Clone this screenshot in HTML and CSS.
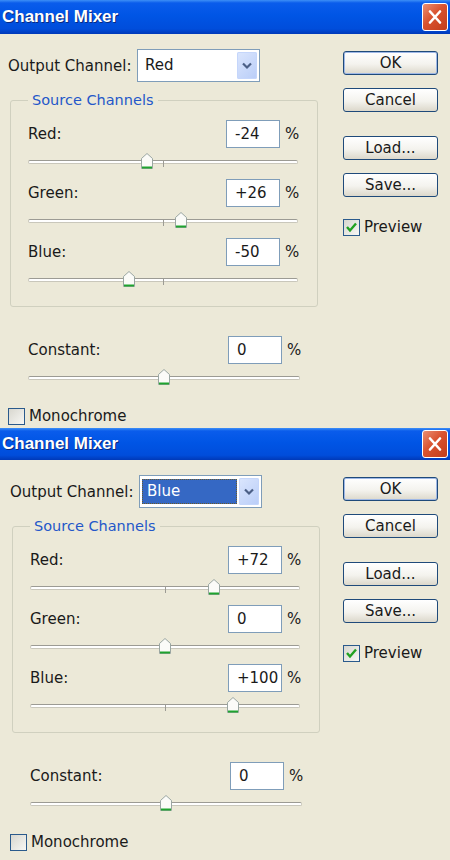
FILE: index.html
```html
<!DOCTYPE html>
<html lang="en">
<head>
    <meta charset="UTF-8">
    <title>Channel Mixer</title>
    <link rel="stylesheet" href="styles.css">
</head>
<body>
    <div class="dialog">
        <div class="titlebar">
            <span class="title">Channel Mixer</span>
            <span class="close"><svg width="24" height="26" viewBox="0 0 24 26"><path d="M7 7.5 L17 18.5 M17 7.5 L7 18.5" stroke="#fff" stroke-width="2.6" stroke-linecap="round"/></svg></span>
        </div>
        <div class="dialog-body">
            <div class="main">
                <div class="output-row">
                    <span class="output-label">Output Channel:</span>
                    <div class="select">
                        <span class="select-value">Red</span>
                        <span class="select-arrow"><svg width="20" height="27" viewBox="0 0 20 27"><path d="M6 11.5 L10 15.5 L14 11.5" fill="none" stroke="#4b5f86" stroke-width="2.2"/></svg></span>
                    </div>
                </div>
                <fieldset class="group">
                    <legend>Source Channels</legend>
                    <div class="channels">
                        <div class="channel">
                            <div class="channel-head"><span class="channel-name">Red:</span><span class="field">-24</span><span class="pct">%</span></div>
                            <div class="slider"><span class="tick"></span><span class="thumb" style="left: 44%"><svg width="12" height="16" viewBox="0 0 12 16"><path d="M6 0.5 L11.5 5.5 L11.5 15.5 L0.5 15.5 L0.5 5.5 Z" fill="#fbfbf8" stroke="#9aa6a2"/><path d="M1 14.5 H11" stroke="#1fa32e" stroke-width="2"/></svg></span></div>
                        </div>
                        <div class="channel">
                            <div class="channel-head"><span class="channel-name">Green:</span><span class="field">+26</span><span class="pct">%</span></div>
                            <div class="slider"><span class="tick"></span><span class="thumb" style="left: 56.5%"><svg width="12" height="16" viewBox="0 0 12 16"><path d="M6 0.5 L11.5 5.5 L11.5 15.5 L0.5 15.5 L0.5 5.5 Z" fill="#fbfbf8" stroke="#9aa6a2"/><path d="M1 14.5 H11" stroke="#1fa32e" stroke-width="2"/></svg></span></div>
                        </div>
                        <div class="channel">
                            <div class="channel-head"><span class="channel-name">Blue:</span><span class="field">-50</span><span class="pct">%</span></div>
                            <div class="slider"><span class="tick"></span><span class="thumb" style="left: 37.5%"><svg width="12" height="16" viewBox="0 0 12 16"><path d="M6 0.5 L11.5 5.5 L11.5 15.5 L0.5 15.5 L0.5 5.5 Z" fill="#fbfbf8" stroke="#9aa6a2"/><path d="M1 14.5 H11" stroke="#1fa32e" stroke-width="2"/></svg></span></div>
                        </div>
                    </div>
                </fieldset>
                <div class="channel constant">
                    <div class="channel-head"><span class="channel-name">Constant:</span><span class="field">0</span><span class="pct">%</span></div>
                    <div class="slider"><span class="thumb" style="left: 50%"><svg width="12" height="16" viewBox="0 0 12 16"><path d="M6 0.5 L11.5 5.5 L11.5 15.5 L0.5 15.5 L0.5 5.5 Z" fill="#fbfbf8" stroke="#9aa6a2"/><path d="M1 14.5 H11" stroke="#1fa32e" stroke-width="2"/></svg></span></div>
                </div>
                <div class="check mono"><span class="box"></span>Monochrome</div>
            </div>
            <div class="side">
                <button class="btn btn-default">OK</button>
                <button class="btn btn-cancel">Cancel</button>
                <button class="btn btn-load">Load...</button>
                <button class="btn btn-save">Save...</button>
                <div class="check preview"><span class="box"><svg width="15" height="15" viewBox="0 0 15 15"><path d="M3 7 L6 10.5 L12 3.5" fill="none" stroke="#21a121" stroke-width="2.4"/></svg></span>Preview</div>
            </div>
        </div>
    </div>

    <div class="dialog">
        <div class="titlebar">
            <span class="title">Channel Mixer</span>
            <span class="close"><svg width="24" height="26" viewBox="0 0 24 26"><path d="M7 7.5 L17 18.5 M17 7.5 L7 18.5" stroke="#fff" stroke-width="2.6" stroke-linecap="round"/></svg></span>
        </div>
        <div class="dialog-body">
            <div class="main">
                <div class="output-row">
                    <span class="output-label">Output Channel:</span>
                    <div class="select">
                        <span class="select-value selected">Blue</span>
                        <span class="select-arrow"><svg width="20" height="27" viewBox="0 0 20 27"><path d="M6 11.5 L10 15.5 L14 11.5" fill="none" stroke="#4b5f86" stroke-width="2.2"/></svg></span>
                    </div>
                </div>
                <fieldset class="group">
                    <legend>Source Channels</legend>
                    <div class="channels">
                        <div class="channel">
                            <div class="channel-head"><span class="channel-name">Red:</span><span class="field">+72</span><span class="pct">%</span></div>
                            <div class="slider"><span class="tick"></span><span class="thumb" style="left: 68%"><svg width="12" height="16" viewBox="0 0 12 16"><path d="M6 0.5 L11.5 5.5 L11.5 15.5 L0.5 15.5 L0.5 5.5 Z" fill="#fbfbf8" stroke="#9aa6a2"/><path d="M1 14.5 H11" stroke="#1fa32e" stroke-width="2"/></svg></span></div>
                        </div>
                        <div class="channel">
                            <div class="channel-head"><span class="channel-name">Green:</span><span class="field">0</span><span class="pct">%</span></div>
                            <div class="slider"><span class="tick"></span><span class="thumb" style="left: 50%"><svg width="12" height="16" viewBox="0 0 12 16"><path d="M6 0.5 L11.5 5.5 L11.5 15.5 L0.5 15.5 L0.5 5.5 Z" fill="#fbfbf8" stroke="#9aa6a2"/><path d="M1 14.5 H11" stroke="#1fa32e" stroke-width="2"/></svg></span></div>
                        </div>
                        <div class="channel">
                            <div class="channel-head"><span class="channel-name">Blue:</span><span class="field">+100</span><span class="pct">%</span></div>
                            <div class="slider"><span class="tick"></span><span class="thumb" style="left: 75%"><svg width="12" height="16" viewBox="0 0 12 16"><path d="M6 0.5 L11.5 5.5 L11.5 15.5 L0.5 15.5 L0.5 5.5 Z" fill="#fbfbf8" stroke="#9aa6a2"/><path d="M1 14.5 H11" stroke="#1fa32e" stroke-width="2"/></svg></span></div>
                        </div>
                    </div>
                </fieldset>
                <div class="channel constant">
                    <div class="channel-head"><span class="channel-name">Constant:</span><span class="field">0</span><span class="pct">%</span></div>
                    <div class="slider"><span class="thumb" style="left: 50%"><svg width="12" height="16" viewBox="0 0 12 16"><path d="M6 0.5 L11.5 5.5 L11.5 15.5 L0.5 15.5 L0.5 5.5 Z" fill="#fbfbf8" stroke="#9aa6a2"/><path d="M1 14.5 H11" stroke="#1fa32e" stroke-width="2"/></svg></span></div>
                </div>
                <div class="check mono"><span class="box"></span>Monochrome</div>
            </div>
            <div class="side">
                <button class="btn btn-default">OK</button>
                <button class="btn btn-cancel">Cancel</button>
                <button class="btn btn-load">Load...</button>
                <button class="btn btn-save">Save...</button>
                <div class="check preview"><span class="box"><svg width="15" height="15" viewBox="0 0 15 15"><path d="M3 7 L6 10.5 L12 3.5" fill="none" stroke="#21a121" stroke-width="2.4"/></svg></span>Preview</div>
            </div>
        </div>
    </div>
</body>
</html>
```

FILE: styles.css
```css
body {
    margin: 0;
    background-color: #fff;
    font-family: "DejaVu Sans", Verdana, sans-serif;
    font-size: 15px;
    color: #1a1a1a;
}

.dialog {
    width: 450px;
    height: 428px;
    background-color: #ece9d8;
    overflow: hidden;
}
.dialog + .dialog {
    height: 432px;
}

/* title bar */
.titlebar {
    height: 34px;
    display: flex;
    align-items: center;
    justify-content: space-between;
    padding: 0 2px 0 2px;
    box-sizing: border-box;
    background: linear-gradient(#3d8ff6 0, #0a5ceb 3px, #0055e5 45%, #004ddb 85%, #0039b8 100%);
}
.dialog + .dialog .titlebar {
    height: 32px;
}
.title {
    font-family: "Liberation Sans", Arial, sans-serif;
    font-weight: bold;
    font-size: 17px;
    color: #fff;
    text-shadow: 1px 1px 0 #0a2a80;
}
.close {
    display: flex;
    width: 24px;
    height: 26px;
    border: 1px solid #fff;
    border-radius: 3px;
    background: linear-gradient(135deg, #eb8f73 0%, #d9522f 45%, #c23c1c 100%);
}

/* body */
.dialog-body {
    display: flex;
    padding: 0 12px 0 8px;
}
.dialog + .dialog .dialog-body {
    padding-left: 10px;
}
.main {
    width: 312px;
}
.side {
    margin-left: auto;
    width: 95px;
    display: flex;
    flex-direction: column;
    padding-top: 17px;
}

.output-row {
    display: flex;
    align-items: center;
    margin-top: 15px;
}
.output-label {
    width: 129px;
}
.select {
    width: 123px;
    height: 33px;
    box-sizing: border-box;
    border: 1px solid #7f9db9;
    background-color: #fff;
    display: flex;
    align-items: center;
    padding: 2px;
}
.select-value {
    flex: 1;
    height: 25px;
    line-height: 25px;
    padding-left: 5px;
}
.select-value.selected {
    background-color: #3568c4;
    color: #fff;
    outline: 1px dotted #6b5a2a;
    outline-offset: -1px;
    margin-right: 2px;
}
.select-arrow {
    display: flex;
    width: 20px;
    height: 27px;
    border-radius: 2px;
    background: linear-gradient(135deg, #dbe6fd, #b9cdf8);
    box-shadow: inset 0 0 0 1px #c5d6fb;
}

/* group box */
.group {
    margin: 9px 0 0 2px;
    width: 308px;
    box-sizing: border-box;
    padding: 11px 19px 19px 17px;
    border: 1px solid #d0d0bf;
    border-radius: 3px;
    min-width: 0;
}
.group legend {
    padding: 0 4px;
    line-height: 18px;
    font-size: 14.5px;
    color: #2457c9;
}
.channels {
    display: flex;
    flex-direction: column;
    gap: 10px;
}

.channel-head {
    display: flex;
    align-items: center;
    height: 28px;
}
.channel-name {
    flex: 1;
}
.field {
    width: 54px;
    height: 28px;
    box-sizing: border-box;
    border: 1px solid #7f9db9;
    background-color: #fff;
    line-height: 26px;
    padding-left: 8px;
}
.pct {
    width: 13px;
    margin-left: 5px;
}

/* slider */
.slider {
    position: relative;
    height: 16px;
    margin-top: 5px;
}
.slider::before {
    content: "";
    position: absolute;
    left: 0;
    right: 0;
    top: 7px;
    height: 2px;
    border: 1px solid #c9c7bb;
    border-top-color: #9c9b94;
    border-radius: 3px;
    background-color: #fff;
}
.tick {
    position: absolute;
    left: 50%;
    top: 8px;
    width: 1px;
    height: 6px;
    background-color: #9c9b94;
}
.thumb {
    position: absolute;
    top: 0;
    width: 12px;
    height: 16px;
    transform: translateX(-50%);
    display: flex;
}

.constant {
    margin-top: 29px;
    padding-left: 20px;
    width: 272px;
}

/* buttons */
.btn {
    height: 24px;
    width: 95px;
    box-sizing: border-box;
    border: 1px solid #1f4a7a;
    border-radius: 3px;
    background: linear-gradient(#ffffff 0%, #f4f3ee 55%, #dcd8cb 100%);
    font-family: "DejaVu Sans", Verdana, sans-serif;
    font-size: 15px;
    color: #1a1a1a;
    padding: 0;
    line-height: 21px;
}
.btn-default {
    box-shadow: inset 0 0 0 1px #9fb8e6;
}
.btn-cancel {
    margin-top: 13px;
}
.btn-load {
    margin-top: 24px;
}
.btn-save {
    margin-top: 13px;
}

/* check boxes */
.check {
    display: flex;
    align-items: center;
    gap: 4px;
}
.box {
    width: 17px;
    height: 17px;
    box-sizing: border-box;
    border: 1px solid #2a5a8c;
    background: linear-gradient(135deg, #d8d7cf, #f7f7f4);
    display: flex;
    align-items: center;
    justify-content: center;
}
.preview {
    margin-top: 21px;
}
.mono {
    margin-top: 22px;
}
```
